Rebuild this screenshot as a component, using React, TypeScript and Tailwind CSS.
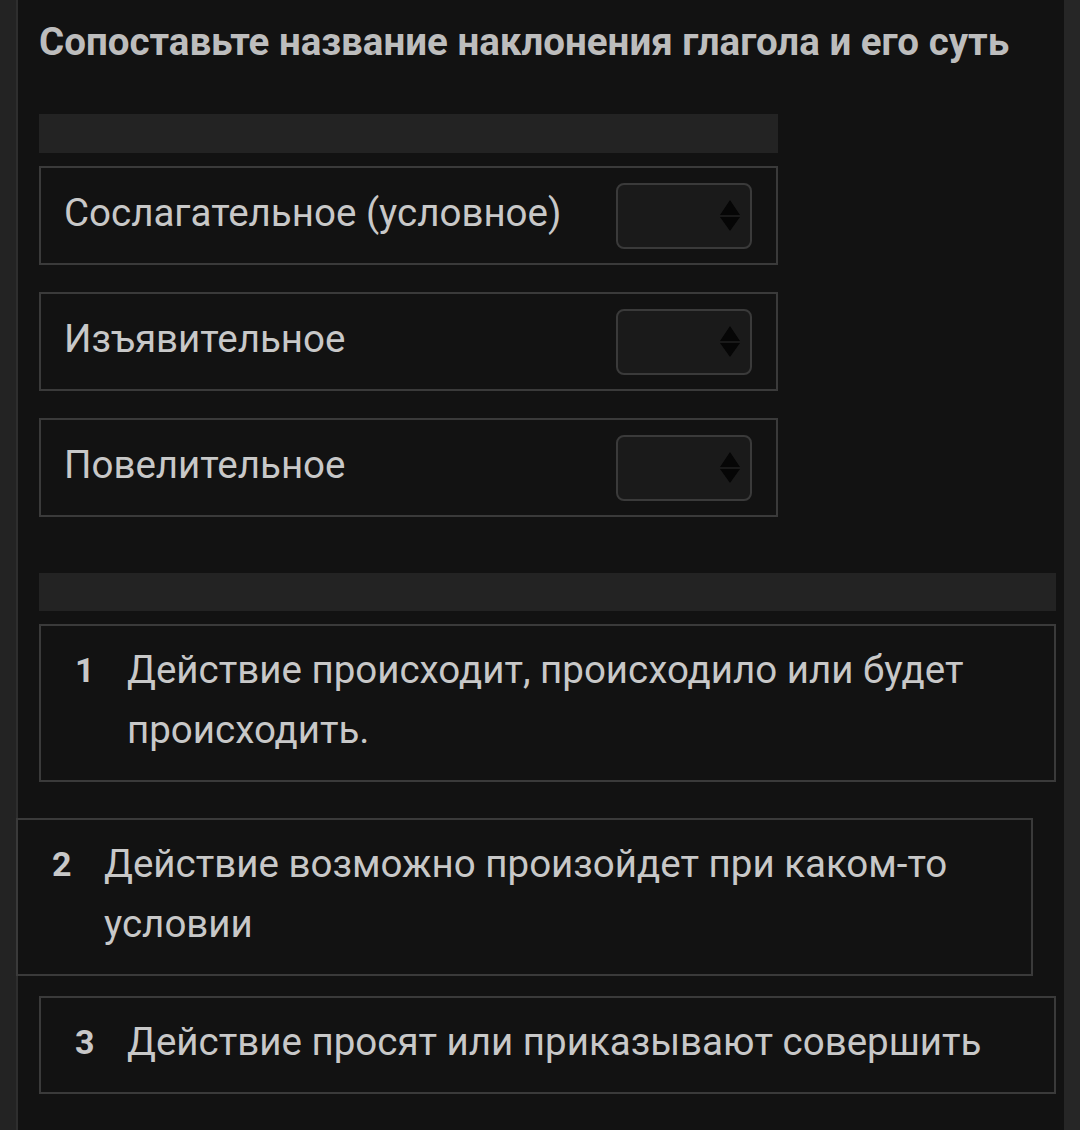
const leftItems = ["Сослагательное (условное)", "Изъявительное", "Повелительное"]

const rightItems = [
  { n: 1, text: "Действие происходит, происходило или будет происходить.", dragged: false },
  { n: 2, text: "Действие возможно произойдет при каком-то условии", dragged: true },
  { n: 3, text: "Действие просят или приказывают совершить", dragged: false },
]

const SelectArrows = () => (
  <svg width="20" height="32" viewBox="0 0 20 32" className="shrink-0">
    <path d="M10 0 L20 15 L0 15 Z" fill="#060606" />
    <path d="M0 17 L20 17 L10 31 Z" fill="#060606" />
  </svg>
)

const App = () => {
  return (
    <div
      className="flex min-h-[1130px] w-full bg-[#121212] text-[#c8c8c8]"
      style={{ fontFamily: "Roboto, 'Noto Sans', sans-serif" }}
    >
      <div className="w-[16px] shrink-0 bg-[#232323]" />
      <div className="flex-1 border-l-2 border-[#2e2e2e] bg-[#121212] pl-[21px] pr-[8px] pt-[19px]">
        <h1 className="text-[38.5px] font-bold leading-[46px] text-[#bdbdbd]">
          Сопоставьте название наклонения глагола и его суть
        </h1>

        <div className="mt-[49px] h-[39px] w-[739px] bg-[#232323]" />

        <div className="mt-[13px] flex w-[739px] flex-col gap-[27px]">
          {leftItems.map((label) => (
            <div
              key={label}
              className="flex h-[99px] items-center justify-between border-2 border-[#3a3a3a] pl-[23px] pr-[24px]"
            >
              <span className="pb-[6px] text-[38.5px] leading-[46px]">{label}</span>
              <div className="flex h-[66px] w-[136px] items-center justify-end rounded-[8px] border-2 border-[#3a3a3a] bg-[#1a1a1a] pr-[10px]">
                <SelectArrows />
              </div>
            </div>
          ))}
        </div>

        <div className="mt-[56px] h-[38px] w-full bg-[#232323]" />

        <div className="mt-[13px] flex flex-col">
          {rightItems.map((item, i) => (
            <div
              key={item.n}
              className={
                "flex border-2 border-[#3a3a3a] pt-[14px] pb-[20px] pl-[34px] pr-[24px] " +
                (i === 0 ? "" : i === 1 ? "mt-[36px] " : "mt-[20px] ") +
                (item.dragged ? "-translate-x-[23px] w-[1017px]" : "w-full")
              }
            >
              <span className="w-[52px] shrink-0 text-[34px] font-bold leading-[60px]">{item.n}</span>
              <span className="text-[38.5px] leading-[60px]">{item.text}</span>
            </div>
          ))}
        </div>
      </div>
      <div className="w-[16px] shrink-0 bg-[#262626]" />
    </div>
  )
}

export default App
